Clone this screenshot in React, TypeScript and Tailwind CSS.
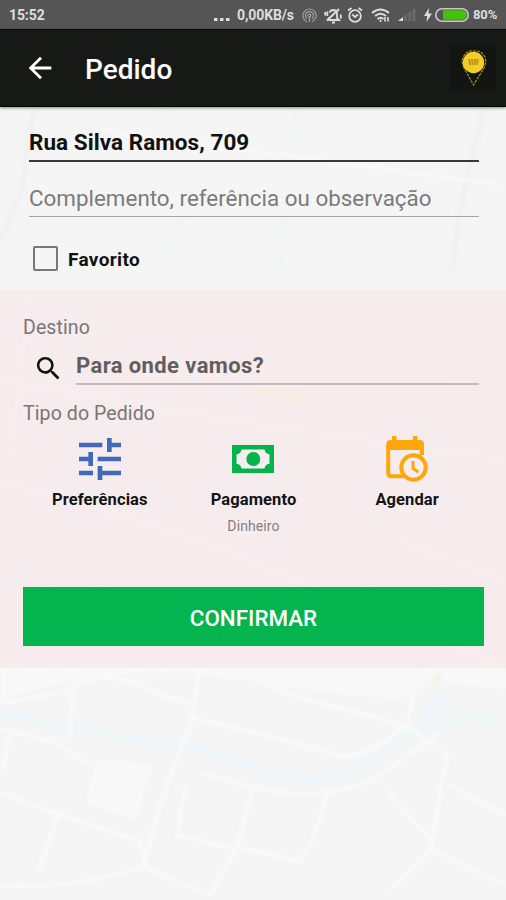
import React from "react";
import { MdTune, MdSearch, MdArrowBack } from "react-icons/md";

function MapBackground() {
  return (
    <svg className="absolute inset-0" width="506" height="900" viewBox="0 0 506 900" fill="none">
      <rect width="506" height="900" fill="#f5f5f5" />
      <g className="blur-[1.5px]">
        <g stroke="#f0f0f0" strokeWidth="6">
          <path d="M34 108 L22 190 L0 240" />
          <path d="M484 108 L460 210 L452 270" />
        </g>
        <g stroke="#f1f3f3" strokeWidth="4">
          <path d="M165 108 L105 290 L35 668" />
          <path d="M205 160 L150 290 L110 560 L70 668" />
          <path d="M295 108 L278 290 L300 390 L350 560" />
          <path d="M150 320 L320 350 L506 385" />
          <path d="M506 350 L480 470 L450 560 L420 668" />
          <path d="M280 300 L440 322" />
          <path d="M366 540 L370 590" />
        </g>
        <g stroke="#f8f8f8" strokeWidth="4">
          <path d="M100 130 L500 185 M0 380 L230 420 L506 460 M0 480 L200 540 L506 668 M30 290 L10 460 M395 540 L506 580" />
        </g>
        <path d="M248 386 L308 392 L306 402 L252 394Z" fill="#f3f5e6" />
        <path d="M0 668 H506 V690 Q430 676 400 700 Q300 690 200 674 Q90 668 0 700Z" fill="#f7f8f7" />
        <path d="M0 714 C70 722 90 737 150 740 C220 748 260 777 310 781 C350 779 388 752 418 726 Q440 716 506 720" stroke="#f0f5f8" strokeWidth="13" />
        <path d="M412 738 L428 692 L448 694 L441 740Z" fill="#f0f5f8" />
        <path d="M422 681 L444 664 L440 686Z" fill="#f5f6ea" />
        <g stroke="#f9f9f9" strokeWidth="4" strokeLinejoin="round">
          <path d="M0 702 Q50 698 80 683 Q115 669 160 695 L190 704" />
          <path d="M0 728 L55 742 L90 765" />
          <path d="M200 668 L192 718 L160 804 L143 868" />
          <path d="M192 718 L265 735 L345 757 Q375 754 405 725" />
          <path d="M245 674 L300 698 L405 725 L448 756 L440 790 L432 850 L390 890" />
          <path d="M0 792 L60 815 L140 841 L145 867 L210 896" />
          <path d="M60 810 L38 872 M72 690 L70 740 M9 736 L2 774" />
          <path d="M252 790 L237 847 L210 896 M237 847 L300 861 L313 840 L327 795" />
          <path d="M200 773 L250 787 Q330 805 380 775 L440 733" />
          <path d="M385 790 L433 842 M448 784 L506 816 M185 785 L177 835 L235 849" />
          <path d="M0 885 Q80 890 143 866 M432 850 L506 885 M442 665 Q428 680 416 682 L408 722" />
        </g>
        <path d="M95 760 L153 764 L136 820 L86 803Z" fill="#f8f8f8" />
      </g>
    </svg>
  );
}

function StatusBar() {
  return (
    <div className="flex h-[29px] items-center bg-[#555555] pt-[1px] pl-[9px] text-[#dedede]">
      <span className="w-[205px] text-[14px] leading-none font-bold tracking-[-0.1px]">15:52</span>
      <svg width="16" height="5" viewBox="0 0 16 5" className="mt-[8px]" fill="#dedede">
        <rect x="0" y="1" width="3.5" height="3" />
        <rect x="6" y="1" width="3.5" height="3" />
        <rect x="12" y="1" width="3.5" height="3" />
      </svg>
      <span className="ml-[7px] w-[58px] text-[14px] leading-none font-bold tracking-[-0.1px] whitespace-nowrap">0,00KB/s</span>
      <svg width="15" height="15" viewBox="0 0 15 15" className="ml-[7px]" fill="none" stroke="#a2a2a2" strokeWidth="1.2">
        <path d="M5 13.7 A6.6 6.6 0 1 1 10 13.7" />
        <path d="M5 10.8 A4 4 0 1 1 10 10.8" />
        <circle cx="7.5" cy="7.5" r="1.3" />
        <path d="M7.5 9 V14" />
      </svg>
      <svg width="18" height="17" viewBox="0 0 18 17" className="ml-[7px]" fill="none" stroke="#dedede" strokeWidth="1.8">
        <path d="M5.5 5.5 Q6.5 3 9.5 3 Q13 3.5 13 7 V11 L15 13 H4 L5.3 10.5" />
        <path d="M8 15.5 H11 M15 2 L3 13.5 M1.2 5 V8.5 M3.3 4.5 V9 M16.8 7.5 V11.5" />
      </svg>
      <svg width="16" height="16" viewBox="0 0 16 16" className="ml-[5px]" fill="none" stroke="#dedede" strokeWidth="1.8">
        <circle cx="8" cy="9" r="5.8" />
        <path d="M1 3.5 L4.5 1 M15 3.5 L11.5 1 M5.2 7.5 L8 10 L11 7.5" />
      </svg>
      <svg width="19" height="15" viewBox="0 0 19 15" className="ml-[8px]" fill="none" stroke="#dedede" strokeWidth="2">
        <path d="M1 5 Q9.5 -2 18 5 M4 8 Q9.5 3.5 15 8 M6.5 11 Q9.5 8.5 12.5 11" />
        <path d="M9.5 14 V11.5 M14 13.5 V9 M17 13.5 V9" strokeWidth="1.6" />
      </svg>
      <svg width="18" height="14" viewBox="0 0 18 14" className="ml-[8px]">
        <path d="M0 13 L5 9 V13Z" fill="#dedede" />
        <path d="M6 13 V8 L9 6 V13Z M10.3 13 V5 L13 3 V13Z M14.3 13 V2 L17.5 0 V13Z" fill="#6a6a6a" />
      </svg>
      <svg width="8" height="14" viewBox="0 0 8 14" className="ml-[8px]" fill="#dedede">
        <path d="M5 0 L0 8 H3.2 L2.5 14 L8 5.5 H4.5Z" />
      </svg>
      <svg width="34" height="14" viewBox="0 0 34 14" className="ml-[3px]">
        <rect x="0.8" y="0.8" width="32.4" height="12.4" rx="6.2" fill="#555555" stroke="#c9c9c9" strokeWidth="1.6" />
        <path d="M8 2.3 H27 A4.7 4.7 0 0 1 27 11.7 H8Z" fill="#43c308" />
      </svg>
      <span className="-mt-[1px] ml-[4px] text-[13px] leading-none font-bold tracking-[-0.1px]">80%</span>
    </div>
  );
}

function LocationPin() {
  return (
    <svg width="46" height="46" viewBox="0 0 46 46" className="mt-[2px]">
      <rect width="46" height="46" fill="#131513" />
      <path d="M14 22 L12 16 L13 11 L16 7 L20 5 H28 L32 7 L35 11 L36 16 L34 22 L23.5 39 Z" fill="none" stroke="#a98b1d" strokeWidth="1.2" strokeDasharray="3 1" />
      <circle cx="23.5" cy="16.5" r="10.7" fill="#f5cd29" />
      <path d="M18.5 14 H28.5 M18.5 16 H28.5 M19 18 H28" stroke="#9d831b" strokeWidth="1.3" strokeDasharray="2 .7" />
    </svg>
  );
}

function CashIcon() {
  return (
    <svg width="42" height="28" viewBox="0 0 42 28">
      <rect width="42" height="28" fill="#03b44d" />
      <path d="M9.5 4.5 H32.5 Q33 8.5 37.5 9.5 V18.5 Q33 19.5 32.5 23.5 H9.5 Q9 19.5 4.5 18.5 V9.5 Q9 8.5 9.5 4.5Z" fill="#f6edee" />
      <circle cx="21.3" cy="14" r="7" fill="#03b44d" />
    </svg>
  );
}

function ScheduleIcon() {
  return (
    <svg width="42" height="46" viewBox="0 0 42 46" fill="none">
      <path d="M2.2 9 V37 Q2.2 40.3 5.5 40.3 H18" stroke="#ffa70a" strokeWidth="4" />
      <path d="M0.3 14 V8 Q0.3 4 4.3 4 H6 V0 H10.5 V4 H27 V0 H31.5 V4 H34 Q38 4 38 8 V19 H34 V14Z" fill="#ffa70a" />
      <circle cx="27.5" cy="31.5" r="12.2" fill="#f6edee" stroke="#ffa70a" strokeWidth="4" />
      <path d="M27 25 V32.5 L32.5 36" stroke="#ffa70a" strokeWidth="3" />
    </svg>
  );
}

function Option({ icon, label, detail }: { icon: React.ReactNode; label: string; detail?: string }) {
  return (
    <button className="flex flex-col items-center">
      <span className="flex h-[56px] items-center justify-center">{icon}</span>
      <span className="mt-[3px] text-[16.5px] leading-[20px] font-bold tracking-[0.1px] text-[#141414]">{label}</span>
      {detail && <span className="mt-[8px] text-[14px] leading-[16px] tracking-[0.1px] text-[#858080]">{detail}</span>}
    </button>
  );
}

export default function App() {
  return (
    <main className="relative h-[900px] w-[506px] overflow-hidden font-['Roboto',sans-serif]">
      <MapBackground />
      <div className="relative flex flex-col">
        <StatusBar />
        <header className="flex h-[78px] items-center border-t border-b border-t-[#050705] border-b-[#050705] bg-[#171917] pr-[10px] pl-[23px] shadow-[0_1px_3px_rgba(0,0,0,0.45)]">
          <MdArrowBack className="size-[34px] text-white" />
          <h1 className="mt-[3px] ml-[28px] grow text-[28px] leading-none font-medium text-white">Pedido</h1>
          <LocationPin />
        </header>

        <section className="flex h-[183px] flex-col pr-[27px] pl-[29px]">
          <div className="h-[54.5px] border-b-2 border-[#383838] pt-[22px] text-[22.5px] leading-[26px] font-bold tracking-[0.05px] whitespace-nowrap text-[#111111]">Rua Silva Ramos, 709</div>
          <div className="h-[55.5px] border-b-[1.5px] border-[#a4a4a4] pt-[23px] text-[22.4px] leading-[26px] whitespace-nowrap text-[#7b7b7b]">Complemento, referência ou observação</div>
          <label className="mt-[29px] flex items-center pl-[4px]">
            <span className="size-[25px] rounded-[2px] border-2 border-[#777777]" />
            <span className="mt-[1px] ml-[10px] text-[19px] leading-none font-bold tracking-[0.35px] text-[#111111]">Favorito</span>
          </label>
        </section>

        <section className="flex h-[378px] flex-col bg-[#f7dfe2]/40 pr-[22px] pl-[23px]">
          <h2 className="mt-[27px] text-[19.5px] leading-[22px] tracking-[0.1px] text-[#7b7575]">Destino</h2>
          <div className="mt-[3px] flex h-[43px] pr-[5px]">
            <span className="flex w-[53px] pt-[11px] pl-[10px]">
              <MdSearch className="size-[31px] text-[#111111]" />
            </span>
            <div className="grow border-b-[2px] border-[#c2babb] pt-[11px] text-[22px] leading-[26px] font-bold tracking-[0.4px] text-[#625e5e]">Para onde vamos?</div>
          </div>
          <h2 className="mt-[18px] text-[19.5px] leading-[22px] tracking-[0.1px] text-[#7b7575]">Tipo do Pedido</h2>
          <div className="mt-[6px] grid h-[156px] grid-cols-3">
            <Option icon={<MdTune className="size-[56px] text-[#4269b8]" />} label="Preferências" />
            <Option icon={<CashIcon />} label="Pagamento" detail="Dinheiro" />
            <Option icon={<ScheduleIcon />} label="Agendar" />
          </div>
          <button className="h-[59px] bg-[#03b44f] pt-[4px] text-[22.4px] leading-none font-medium text-white">CONFIRMAR</button>
        </section>
      </div>
    </main>
  );
}
